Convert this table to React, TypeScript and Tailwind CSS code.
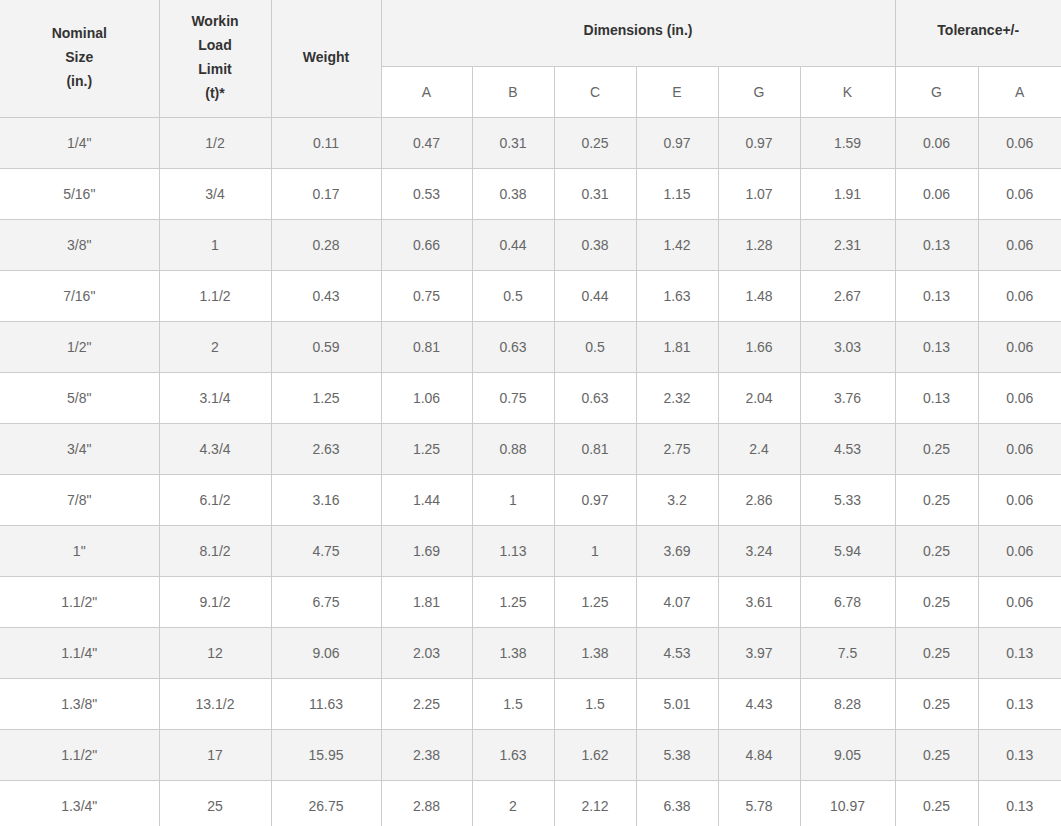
const dims = ["A", "B", "C", "E", "G", "K"]
const tol = ["G", "A"]

const rows: string[][] = [
  ['1/4"', "1/2", "0.11", "0.47", "0.31", "0.25", "0.97", "0.97", "1.59", "0.06", "0.06"],
  ['5/16"', "3/4", "0.17", "0.53", "0.38", "0.31", "1.15", "1.07", "1.91", "0.06", "0.06"],
  ['3/8"', "1", "0.28", "0.66", "0.44", "0.38", "1.42", "1.28", "2.31", "0.13", "0.06"],
  ['7/16"', "1.1/2", "0.43", "0.75", "0.5", "0.44", "1.63", "1.48", "2.67", "0.13", "0.06"],
  ['1/2"', "2", "0.59", "0.81", "0.63", "0.5", "1.81", "1.66", "3.03", "0.13", "0.06"],
  ['5/8"', "3.1/4", "1.25", "1.06", "0.75", "0.63", "2.32", "2.04", "3.76", "0.13", "0.06"],
  ['3/4"', "4.3/4", "2.63", "1.25", "0.88", "0.81", "2.75", "2.4", "4.53", "0.25", "0.06"],
  ['7/8"', "6.1/2", "3.16", "1.44", "1", "0.97", "3.2", "2.86", "5.33", "0.25", "0.06"],
  ['1"', "8.1/2", "4.75", "1.69", "1.13", "1", "3.69", "3.24", "5.94", "0.25", "0.06"],
  ['1.1/2"', "9.1/2", "6.75", "1.81", "1.25", "1.25", "4.07", "3.61", "6.78", "0.25", "0.06"],
  ['1.1/4"', "12", "9.06", "2.03", "1.38", "1.38", "4.53", "3.97", "7.5", "0.25", "0.13"],
  ['1.3/8"', "13.1/2", "11.63", "2.25", "1.5", "1.5", "5.01", "4.43", "8.28", "0.25", "0.13"],
  ['1.1/2"', "17", "15.95", "2.38", "1.63", "1.62", "5.38", "4.84", "9.05", "0.25", "0.13"],
  ['1.3/4"', "25", "26.75", "2.88", "2", "2.12", "6.38", "5.78", "10.97", "0.25", "0.13"],
]

const widths = [159, 112, 110, 91, 82, 82, 82, 82, 95, 83, 83]

export default function App() {
  return (
    <div className="min-h-screen bg-white font-['Liberation_Sans',Arial,sans-serif] text-[14px]">
      <table className="w-[1061px] table-fixed border-collapse text-center">
        <colgroup>
          {widths.map((w, i) => (
            <col key={i} style={{ width: w }} />
          ))}
        </colgroup>
        <thead>
          <tr className="h-[66px] bg-[#f3f3f3] font-bold leading-6 text-[#333]">
            <th rowSpan={2} className="border border-t-0 border-l-0 border-[#ccc] px-2 pb-[3px]">
              Nominal<br />Size<br />(in.)
            </th>
            <th rowSpan={2} className="border border-t-0 border-[#ccc] px-2 pb-[3px]">
              Workin<br />Load<br />Limit<br />(t)*
            </th>
            <th rowSpan={2} className="border border-t-0 border-[#ccc] px-2 pb-[3px]">
              Weight
            </th>
            <th colSpan={6} className="border border-t-0 border-[#ccc] px-2 pb-[6px]">
              Dimensions (in.)
            </th>
            <th colSpan={2} className="border border-t-0 border-r-0 border-[#ccc] px-2 pb-[6px]">
              Tolerance+/-
            </th>
          </tr>
          <tr className="h-[51px] bg-white font-normal text-[#666]">
            {[...dims, ...tol].map((h, i) => (
              <th
                key={i}
                className={`border border-[#ccc] pt-[2px] font-normal ${i === 7 ? "border-r-0" : ""}`}
              >
                {h}
              </th>
            ))}
          </tr>
        </thead>
        <tbody className="text-[#666]">
          {rows.map((r, ri) => (
            <tr key={ri} className={`h-[51px] ${ri % 2 === 0 ? "bg-[#f3f3f3]" : "bg-white"}`}>
              {r.map((c, ci) => (
                <td
                  key={ci}
                  className={`border border-[#ccc] px-2 pt-[2px] ${ci === 0 ? "border-l-0" : ""} ${
                    ci === r.length - 1 ? "border-r-0" : ""
                  }`}
                >
                  {c}
                </td>
              ))}
            </tr>
          ))}
        </tbody>
      </table>
    </div>
  )
}
